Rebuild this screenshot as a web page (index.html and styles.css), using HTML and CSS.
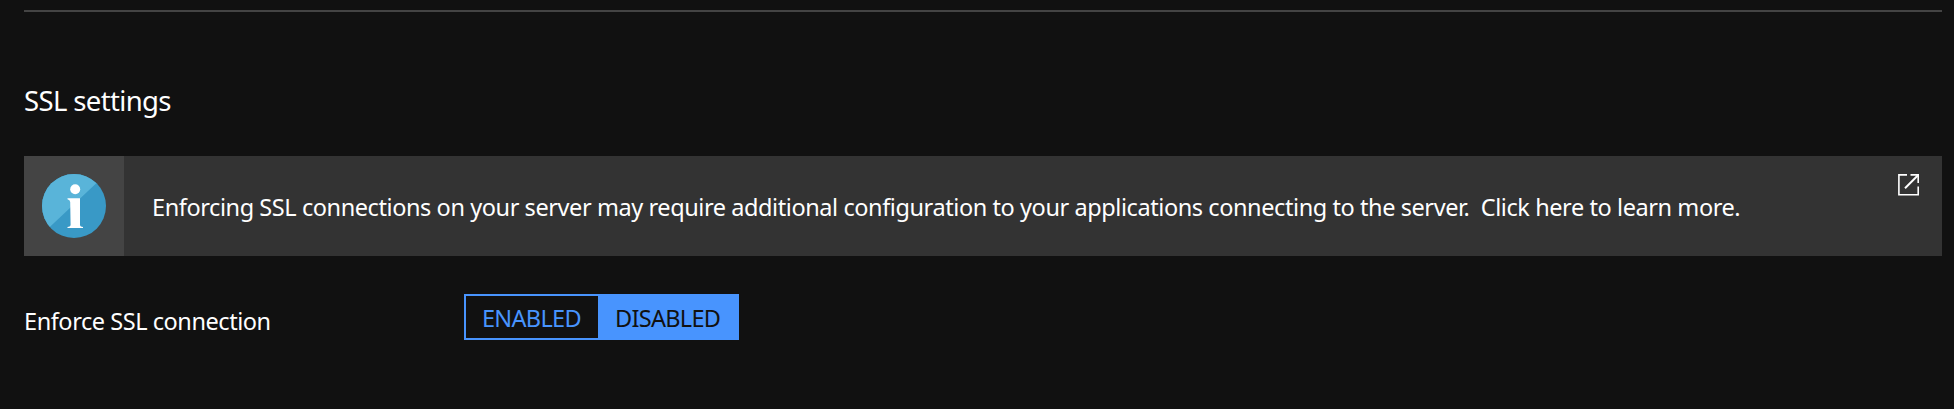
FILE: index.html
```html
<!DOCTYPE html>
<html lang="en">
<head>
<meta charset="utf-8">
<title>SSL settings</title>
<link rel="stylesheet" href="styles.css">
</head>
<body>
<main class="panel">
  <h2 class="title"><span>SSL settings</span></h2>
  <a class="banner">
    <span class="banner-icon">
      <svg width="64" height="64" viewBox="0 0 64 64">
        <clipPath id="disc"><circle cx="32" cy="32" r="32"/></clipPath>
        <circle cx="32" cy="32" r="32" fill="#3999c6"/>
        <path d="M0 60.2L8 52.7L54.3 9.3L64 0H0Z" fill="#59b4d9" clip-path="url(#disc)"/>
        <circle cx="33.2" cy="15.2" r="5" fill="#fff"/>
        <path d="M25.5 24.2H38V51.2Q38.2 52.8 41 53V54H25.5V53Q28.2 52.6 28.6 51.2L28.2 28Q28 25.8 25.5 25.3Z" fill="#fff"/>
      </svg>
    </span>
    <span class="banner-text">Enforcing SSL connections on your server may require additional configuration to your applications connecting to the server.&nbsp; Click here to learn more.</span>
    <svg class="external" width="22" height="22" viewBox="0 0 22 22" fill="none" stroke="#fff" stroke-width="1.6">
      <path d="M9 .9H.9V20.8H20.2V12.5M12.5 .9H20.2V9"/>
      <path d="M20 1.2L7 14.2" stroke-width="2"/>
    </svg>
  </a>
  <div class="row">
    <span class="label">Enforce SSL connection</span>
    <div class="toggle">
      <span class="option enabled">ENABLED</span>
      <span class="option disabled">DISABLED</span>
    </div>
  </div>
</main>
</body>
</html>
```
FILE: styles.css
```css
* { box-sizing: border-box; }
body {
  margin: 0;
  background: #111;
  color: #fff;
  font-family: "Noto Sans", "Open Sans", sans-serif;
  font-size: 23.5px;
}
.panel {
  margin: 10px 12px 0 24px;
  border-top: 2px solid #444;
  padding-top: 69px;
}
.title {
  margin: 0 0 35px;
  font-size: 27.5px;
  font-weight: 400;
  line-height: 40px;
  letter-spacing: -0.63px;
}
.banner {
  display: flex;
  height: 100px;
  background: #333;
  white-space: nowrap;
}
.banner-icon {
  display: flex;
  flex: 0 0 100px;
  align-items: center;
  justify-content: center;
  background: #444;
}
.banner-text {
  flex: 1;
  padding: 35px 0 0 28px;
  line-height: 32px;
  letter-spacing: -0.42px;
}
.external {
  flex: none;
  margin: 18px 22px 0 0;
}
.row {
  display: flex;
  margin-top: 38px;
}
.label {
  width: 440px;
  padding-top: 11px;
  line-height: 32px;
  letter-spacing: -0.44px;
}
.toggle {
  display: flex;
  width: 275px;
  height: 46px;
  border: 2px solid #4894fe;
}
.option {
  height: 42px;
  line-height: 45px;
  letter-spacing: -0.7px;
}
.enabled {
  width: 132px;
  padding-left: 16px;
  color: #4894fe;
}
.disabled {
  flex: 1;
  padding-left: 17px;
  background: #4894fe;
  color: #111;
}
```
